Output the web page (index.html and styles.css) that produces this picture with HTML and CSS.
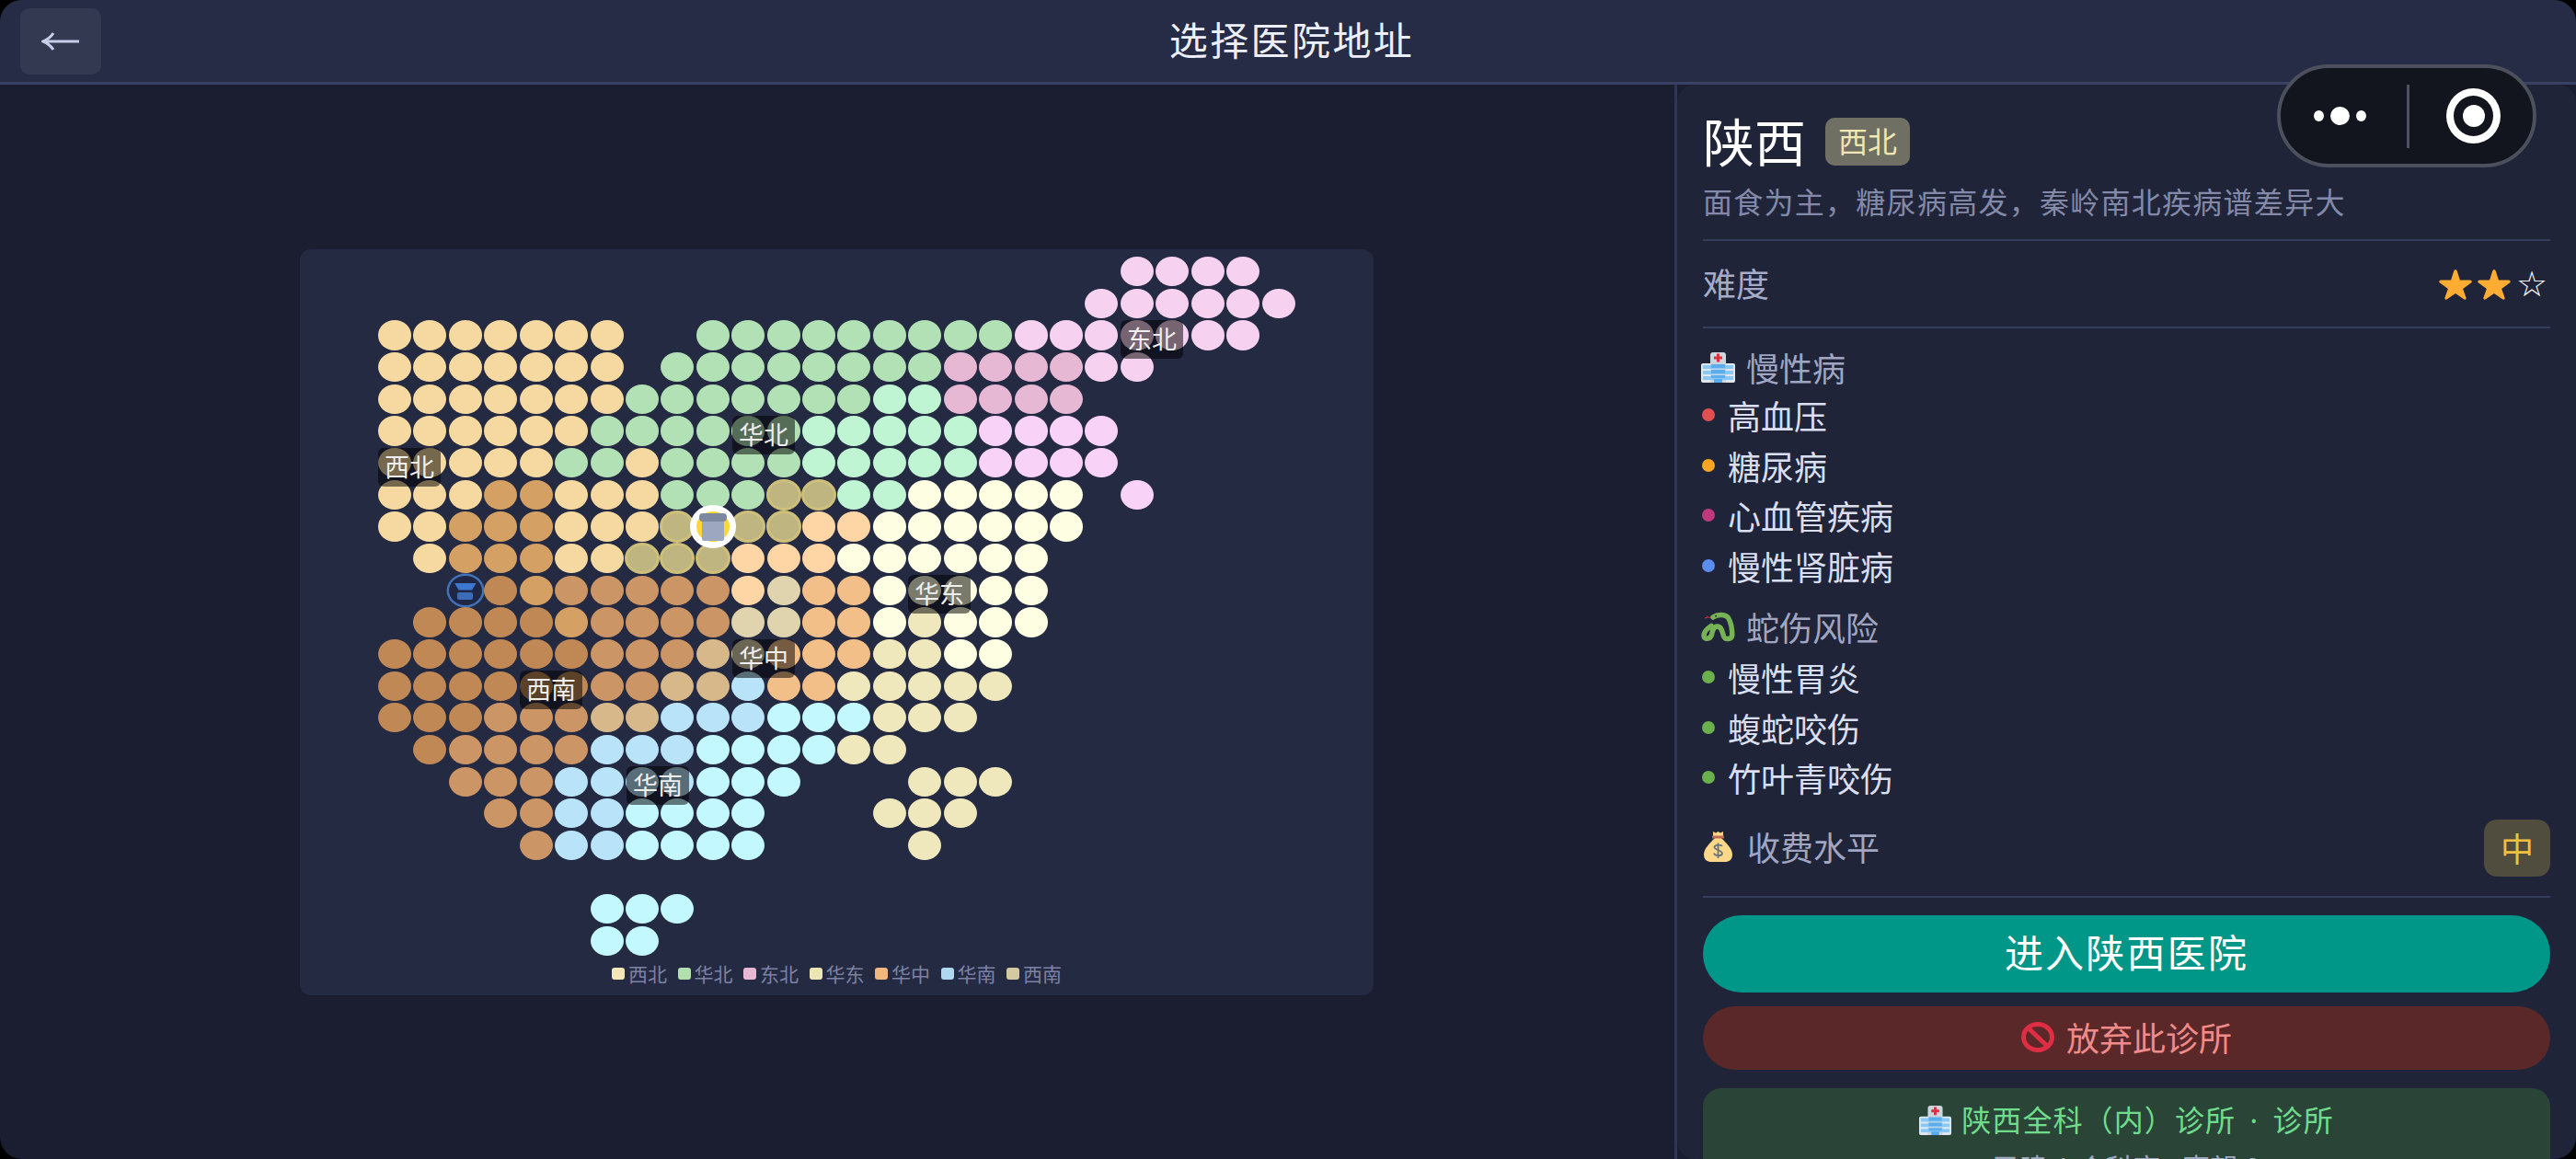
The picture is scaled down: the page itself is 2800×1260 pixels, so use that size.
FILE: index.html
```html
<!DOCTYPE html>
<html lang="zh-CN">
<head>
<meta charset="utf-8">
<title>选择医院地址</title>
<link rel="stylesheet" href="styles.css">
</head>
<body>
<svg class="defs" width="0" height="0" aria-hidden="true">
  <symbol id="hospital" viewBox="0 0 37 33" preserveAspectRatio="none">
    <rect x="0" y="12" width="37" height="21" rx="2" fill="#e1e8ed"/>
    <path d="M10 3a3 3 0 0 1 3-3h11a3 3 0 0 1 3 3v30H10z" fill="#ccd6dd"/>
    <path d="M17 1.500h3v3h3v3h-3v3h-3v-3h-3v-3h3z" fill="#dd2e44"/>
    <path d="M2 14h33v4H2zM2 20h33v4H2zM2 26h33v4H2z" fill="#88c9f9"/>
    <path d="M11 13h15v4H11zM11 19h15v4H11zM11 25h15v3H11z" fill="#5dadec"/>
    <path d="M14 29h9v4h-9z" fill="#55acee"/>
  </symbol>
</svg>
<div class="app">
  <header class="topbar">
    <div class="topbar-left">
      <button class="back" type="button" aria-label="返回">
        <svg width="42" height="22" viewBox="0 0 42 22"><path d="M41 11H3M13 2Q9 8 2 11Q9 14 13 20" fill="none" stroke="#c5cde8" stroke-width="3"/></svg>
      </button>
    </div>
    <h1 class="title">选择医院地址</h1>
    <div></div>
  </header>

  <div class="capsule">
    <span class="more"><i class="d-s"></i><i class="d-b"></i><i class="d-s"></i></span>
    <span class="capsule-sep"></span>
    <span class="target"><i></i></span>
  </div>

  <main class="main">
    <section class="stage">
      <div class="map">
        <div class="grid" id="grid"></div>
        <span class="region r-xb">西北</span>
        <span class="region r-hb">华北</span>
        <span class="region r-db">东北</span>
        <span class="region r-hd">华东</span>
        <span class="region r-hz">华中</span>
        <span class="region r-xn">西南</span>
        <span class="region r-hn">华南</span>
        <ul class="legend">
          <li><i class="sw sw1"></i>西北</li>
          <li><i class="sw sw2"></i>华北</li>
          <li><i class="sw sw3"></i>东北</li>
          <li><i class="sw sw4"></i>华东</li>
          <li><i class="sw sw5"></i>华中</li>
          <li><i class="sw sw6"></i>华南</li>
          <li><i class="sw sw7"></i>西南</li>
        </ul>
      </div>
    </section>

    <aside class="panel">
      <div class="panel-inner">
      <div class="name-row">
        <h2 class="name">陕西</h2>
        <span class="tag">西北</span>
      </div>
      <p class="desc">面食为主，糖尿病高发，秦岭南北疾病谱差异大</p>
      <hr class="rule rule-a">
      <div class="diff">
        <span class="diff-label">难度</span>
        <span class="stars">
          <svg class="star" viewBox="0 0 40 36"><path d="M20 1c1 0 1.600 1 2 2.300l3.200 9.900 11.500.1c2 0 2.800 2 1.200 3.200l-9.300 6.700 3.600 10.100c.6 1.800-1 3-2.600 1.900L20 28.500l-9.600 6.700c-1.600 1.100-3.200-.1-2.600-1.900l3.600-10.100-9.300-6.700c-1.600-1.200-.8-3.200 1.200-3.200l11.500-.1 3.200-9.900C18.400 2 19 1 20 1z" fill="#ffac33"/></svg>
          <svg class="star" viewBox="0 0 40 36"><path d="M20 1c1 0 1.600 1 2 2.300l3.200 9.900 11.500.1c2 0 2.800 2 1.200 3.200l-9.300 6.700 3.600 10.100c.6 1.800-1 3-2.600 1.900L20 28.500l-9.600 6.700c-1.600 1.100-3.200-.1-2.600-1.900l3.600-10.100-9.300-6.700c-1.600-1.200-.8-3.200 1.200-3.200l11.500-.1 3.200-9.900C18.400 2 19 1 20 1z" fill="#ffac33"/></svg>
          <span class="star-empty">☆</span>
        </span>
      </div>
      <hr class="rule">

      <h3 class="sec sec-first"><svg class="ico"><use href="#hospital"/></svg>慢性病</h3>
      <ul class="items">
        <li><i class="dot c-red"></i>高血压</li>
        <li><i class="dot c-org"></i>糖尿病</li>
        <li><i class="dot c-mag"></i>心血管疾病</li>
        <li><i class="dot c-blu"></i>慢性肾脏病</li>
      </ul>

      <h3 class="sec sec-next">
        <svg class="ico" viewBox="0 0 37 33">
          <path d="M13 6C18 2.500 27 2.500 30 7.500C33 13 33.800 20 33.800 25.500C33 30.500 26 31 24.500 26.500C23 21 22 16 17.500 16C13.500 16 12.500 20 11.500 25C10 30.500 3 30.500 3 26C3 22 7 18 11 15.500" fill="none" stroke="#77b255" stroke-width="5.500" stroke-linecap="round"/>
          <path d="M10.500 6.500l-3-.5-1.500-1.500M7.500 6l-3.500 1" fill="none" stroke="#dd2e44" stroke-width="1"/>
          <circle cx="16" cy="4.800" r="1" fill="#292f33"/>
        </svg>蛇伤风险
      </h3>
      <ul class="items items-b">
        <li><i class="dot c-grn"></i>慢性胃炎</li>
        <li><i class="dot c-grn"></i>蝮蛇咬伤</li>
        <li><i class="dot c-grn"></i>竹叶青咬伤</li>
      </ul>

      <div class="fee">
        <span class="fee-label">
          <svg class="bag" viewBox="0 0 33 33">
            <path d="M11 0l3 1.500L16.500 0 19 1.500 22 0v5l-2 3H13l-2-3z" fill="#fdd888"/>
            <path d="M10 4.500h13v3H10z" fill="#bf6952"/>
            <path d="M12 8h9c5 5 11 11 11 17 0 6-4 8-8 8H9c-4 0-8-2-8-8 0-6 6-12 11-17z" fill="#fdd888"/>
            <path d="M21 16c-1-2-8-2-8.500 1S21 20 21 24c-.5 3-8 3-9-.5M16.500 12.500V29" fill="none" stroke="#67757f" stroke-width="1.800"/>
          </svg>收费水平
        </span>
        <span class="fee-badge">中</span>
      </div>
      <hr class="rule rule-c">

      <button class="btn-enter" type="button">进入陕西医院</button>
      <button class="btn-quit" type="button">
        <svg class="ban" viewBox="0 0 36 33"><ellipse cx="18" cy="16.500" rx="15.500" ry="14" fill="none" stroke="#dd2e44" stroke-width="5"/><path d="M7 6l22 21" stroke="#dd2e44" stroke-width="5"/></svg>放弃此诊所
      </button>

      <div class="clinic">
        <p class="clinic-name"><svg class="ico-sm"><use href="#hospital"/></svg>陕西全科（内）诊所 · 诊所</p>
        <p class="clinic-meta">已建 1 个科室 · 声望 0</p>
      </div>
      </div>
    </aside>
  </main>
</div>
<script src="map.js"></script>
</body>
</html>
```
FILE: styles.css
```css
* { box-sizing: border-box; }
html, body { margin: 0; padding: 0; background: #000; }
body { font-family: "Noto Sans CJK SC", "Noto Sans", sans-serif; }
.defs { position: absolute; }
h1, h2, h3, p, ul { margin: 0; padding: 0; font-weight: 400; }
ul { list-style: none; }
i { display: block; }

.app {
  position: relative;
  width: 2800px;
  height: 1260px;
  overflow: hidden;
  border-radius: 24px;
  background: #1a1e30;
  display: flex;
  flex-direction: column;
}

.topbar {
  height: 92px;
  flex: none;
  background: #262b46;
  border-bottom: 3px solid #3a4263;
  display: grid;
  grid-template-columns: 1fr auto 1fr;
  align-items: center;
}
.topbar-left { padding-left: 22px; }
.back {
  width: 88px;
  height: 72px;
  padding: 0;
  border: 0;
  border-radius: 10px;
  background: #343952;
  display: flex;
  align-items: center;
  justify-content: center;
}
.title {
  color: #eceff9;
  font-size: 42px;
  letter-spacing: 2.400px;
  line-height: 56px;
  padding-left: 8px;
  margin-top: -6px;
}

.capsule {
  position: absolute;
  left: 2475px;
  top: 70px;
  width: 282px;
  height: 112px;
  border: 4px solid #4c505c;
  border-radius: 56px;
  background: #12141e;
  display: flex;
  align-items: center;
  z-index: 5;
}
.more {
  width: 137px;
  padding-right: 8px;
  display: flex;
  align-items: center;
  justify-content: center;
  gap: 7px;
}
.d-s { width: 11px; height: 12px; border-radius: 50%; background: #fff; }
.d-b { width: 21px; height: 20px; border-radius: 50%; background: #fff; }
.capsule-sep { width: 3px; height: 69px; background: #4e5160; }
.target {
  margin-left: 40px;
  width: 59px;
  height: 60px;
  border: 8px solid #fff;
  border-radius: 50%;
  display: flex;
  align-items: center;
  justify-content: center;
}
.target i { width: 24px; height: 24px; border-radius: 50%; background: #fff; }

.main { flex: 1; min-height: 0; display: flex; }
.stage {
  flex: 1;
  display: flex;
  align-items: center;
  justify-content: center;
}

.map {
  position: relative;
  width: 1167px;
  height: 811px;
  margin: 1px 1px 0 0;
  padding: 8px 0 0 85px;
  border-radius: 12px;
  background: #252a43;
}
.grid {
  display: grid;
  grid-template-columns: repeat(26, 36px);
  grid-auto-rows: 32.3px;
  column-gap: 2.43px;
  row-gap: 2.37px;
}
.grid span { display: block; border-radius: 50%; }
.c-a { background: #f5d9a0; }
.c-b { background: #b2e1b6; }
.c-c { background: #c0f5d4; }
.c-d { background: #f6d2f0; }
.c-e { background: #e6b8d4; }
.c-f { background: #f9d3f7; }
.c-g { background: #feffe2; }
.c-h { background: #efe8bd; }
.c-i { background: #d4a064; }
.c-j { background: #bf8855; }
.c-k { background: #cc9565; }
.c-l { background: #fed5a5; }
.c-m { background: #f2bf88; }
.c-n { background: #b9e3f9; }
.c-o { background: #c3f8ff; }
.c-q { background: #e0d4ae; }
.c-r { background: #d7b88a; }
.c-p { background: #bfb580; box-shadow: inset 0 0 0 2px #cfc07a, 0 0 0 1px #cfc07a; }
.grid .c-S {
  position: relative;
  z-index: 2;
  background: #fdd835;
  box-shadow: 0 0 0 7px #fff;
  display: flex;
  flex-direction: column;
  align-items: center;
  padding-top: 2px;
}
.grid .c-M {
  background: #1f2745;
  box-shadow: 0 0 0 2.500px #4072b8;
  display: flex;
  flex-direction: column;
  align-items: center;
  gap: 2px;
  padding-top: 8px;
}
.sel-cap { width: 30px; height: 9px; border-radius: 4px; background: #7b88a0; }
.sel-body { width: 24px; height: 21px; border-radius: 0 0 2px 2px; background: #9da8c0; }
.mk-cap { width: 24px; height: 8px; background: #3c78d0; clip-path: polygon(0 0, 100% 0, 80% 100%, 20% 100%); }
.mk-body { width: 17px; height: 8px; border-radius: 2px; background: #3a6cb8; }

.region {
  position: absolute;
  width: 68px;
  height: 42px;
  border-radius: 6px;
  background: rgba(0, 0, 0, .52);
  color: #efefef;
  font-size: 27px;
  line-height: 39px;
  text-align: center;
  z-index: 3;
}
.r-xb { left: 85px; top: 216px; }
.r-hb { left: 470px; top: 181px; }
.r-db { left: 892px; top: 77px; }
.r-hd { left: 661px; top: 354px; }
.r-hz { left: 470px; top: 424px; }
.r-xn { left: 239px; top: 458px; }
.r-hn { left: 355px; top: 562px; }

.legend {
  display: flex;
  justify-content: center;
  margin: 6px 0 0 -85px;
  gap: 11.500px;
  color: #7c82a3;
  font-size: 21px;
  line-height: 26px;
}
.legend li { display: flex; align-items: center; gap: 4px; }
.sw { width: 14px; height: 13px; border-radius: 3px; }
.sw1 { background: #f5e6b8; }
.sw2 { background: #b2dfb0; }
.sw3 { background: #e6b8d4; }
.sw4 { background: #ece6b4; }
.sw5 { background: #f0b87e; }
.sw6 { background: #afd8f0; }
.sw7 { background: #d4c9a0; }

.panel {
  width: 980px;
  flex: none;
  border-left: 3px solid #2e3555;
}
.panel-inner {
  height: 100%;
  padding: 36px 28px 0;
  background: #1f2439;
  border-radius: 20px;
  overflow: hidden;
}
.name-row { display: flex; align-items: center; height: 52px; gap: 21px; }
.name { color: #fff; font-size: 56px; line-height: 52px; margin-top: -5px; }
.tag {
  height: 52px;
  padding: 0 14px;
  border-radius: 10px;
  background: #6f6f63;
  color: #f0e6b8;
  font-size: 32px;
  line-height: 48px;
}
.desc {
  margin-top: 18px;
  color: #8389a8;
  font-size: 32px;
  letter-spacing: 1.270px;
  line-height: 40px;
}
.rule { height: 2px; margin: 0; border: 0; background: #363d5c; }
.rule-a { margin-top: 22px; }
.rule-c { margin-top: 21px; }
.diff {
  height: 93px;
  display: flex;
  align-items: center;
  justify-content: space-between;
  color: #a6acc8;
  font-size: 36px;
}
.diff-label { margin-top: -3px; }
.stars { display: flex; align-items: center; gap: 2px; padding-right: 3px; }
.star { width: 40px; height: 34px; }
.star-empty { width: 36px; color: #fff; font-family: "DejaVu Sans", sans-serif; font-size: 38px; line-height: 34px; text-align: right; }
.sec {
  display: flex;
  align-items: center;
  height: 40px;
  color: #a0a6c2;
  font-size: 36px;
  line-height: 40px;
}
.sec-first { margin-top: 22px; }
.sec-next { margin-top: 19px; }
.ico { width: 37px; height: 33px; margin: 0 12px 0 -2px; flex: none; }
.items { margin-top: 5px; }
.items-b { margin-top: 7.500px; }
.items li {
  display: flex;
  align-items: center;
  height: 54.600px;
  color: #d9dff0;
  font-size: 36px;
}
.dot { width: 14px; height: 14px; margin: 0 14px 0 -1px; border-radius: 50%; flex: none; }
.c-red { background: #e05050; }
.c-org { background: #f5a623; }
.c-mag { background: #c0397f; }
.c-blu { background: #5b8def; }
.c-grn { background: #6ab04c; }

.fee {
  height: 62px;
  margin-top: 18px;
  display: flex;
  align-items: center;
  justify-content: space-between;
}
.fee-label {
  display: flex;
  align-items: center;
  margin-top: -3px;
  color: #a0a6c2;
  font-size: 36px;
}
.bag { width: 33px; height: 33px; margin-right: 15px; flex: none; }
.fee-badge {
  width: 72px;
  height: 62px;
  border-radius: 14px;
  background: #504c3e;
  color: #f0c040;
  font-size: 36px;
  line-height: 60px;
  text-align: center;
}
.btn-enter, .btn-quit {
  display: flex;
  align-items: center;
  justify-content: center;
  width: 100%;
  padding: 0;
  border: 0;
  font-family: inherit;
}
.btn-enter {
  height: 84px;
  margin-top: 19px;
  padding-bottom: 6px;
  border-radius: 42px;
  background: #009688;
  color: #fff;
  font-size: 42px;
  letter-spacing: 2.200px;
}
.btn-quit {
  height: 69px;
  margin-top: 15px;
  padding-bottom: 2px;
  border-radius: 35px;
  background: #5a2828;
  color: #ef8b8b;
  font-size: 36px;
}
.ban { width: 36px; height: 33px; margin-right: 13px; flex: none; }
.clinic {
  margin-top: 20px;
  padding-top: 15px;
  height: 200px;
  border-radius: 20px;
  background: #2a4438;
  font-family: "Noto Sans", "Noto Sans CJK SC", sans-serif;
  text-align: center;
}
.clinic-name {
  display: flex;
  align-items: center;
  justify-content: center;
  color: #6fdc8c;
  font-size: 32px;
  letter-spacing: 1.100px;
  word-spacing: 6px;
  line-height: 40px;
}
.ico-sm { width: 35px; height: 32px; margin-right: 11px; flex: none; }
.clinic-meta {
  margin-top: 12px;
  color: #a0a8c0;
  font-size: 30px;
  line-height: 40px;
}
```
FILE: map.js
```js
var ROWS = [
  ".....................dddd",
  "....................dddddd",
  "aaaaaaa..bbbbbbbbbddddddd",
  "aaaaaaa.bbbbbbbbeeeedd",
  "aaaaaaabbbbbbbcceeee",
  "aaaaaabbbbbbcccccffff",
  "aaaaabbabbbbcccccffff",
  "aaaiiaaabbbppccggggg.f",
  "aaiiiaaapSppllgggggg",
  ".aiiiaappplllgggggg",
  "..Mjikkkkklqmmggggg",
  ".jjjjikkkkqqmmghggg",
  "jjjjjjkkkrqmmmhhgg",
  "jjjjjjkkrrnmmhhhhh",
  "jjjkkkrrnnnooohhh",
  ".jkkkknnnoooohh",
  "..kkknnnnooo...hhh",
  "...kknnoooo...hhh",
  "....knnoooo....h",
  "",
  "......ooo",
  "......oo"
];
var grid = document.getElementById("grid");
ROWS.forEach(function (row) {
  for (var i = 0; i < 26; i++) {
    var ch = row.charAt(i) || ".";
    var dot = document.createElement("span");
    if (ch !== ".") dot.className = "c-" + ch;
    if (ch === "S") dot.innerHTML = '<i class="sel-cap"></i><i class="sel-body"></i>';
    if (ch === "M") dot.innerHTML = '<i class="mk-cap"></i><i class="mk-body"></i>';
    grid.appendChild(dot);
  }
});
```
